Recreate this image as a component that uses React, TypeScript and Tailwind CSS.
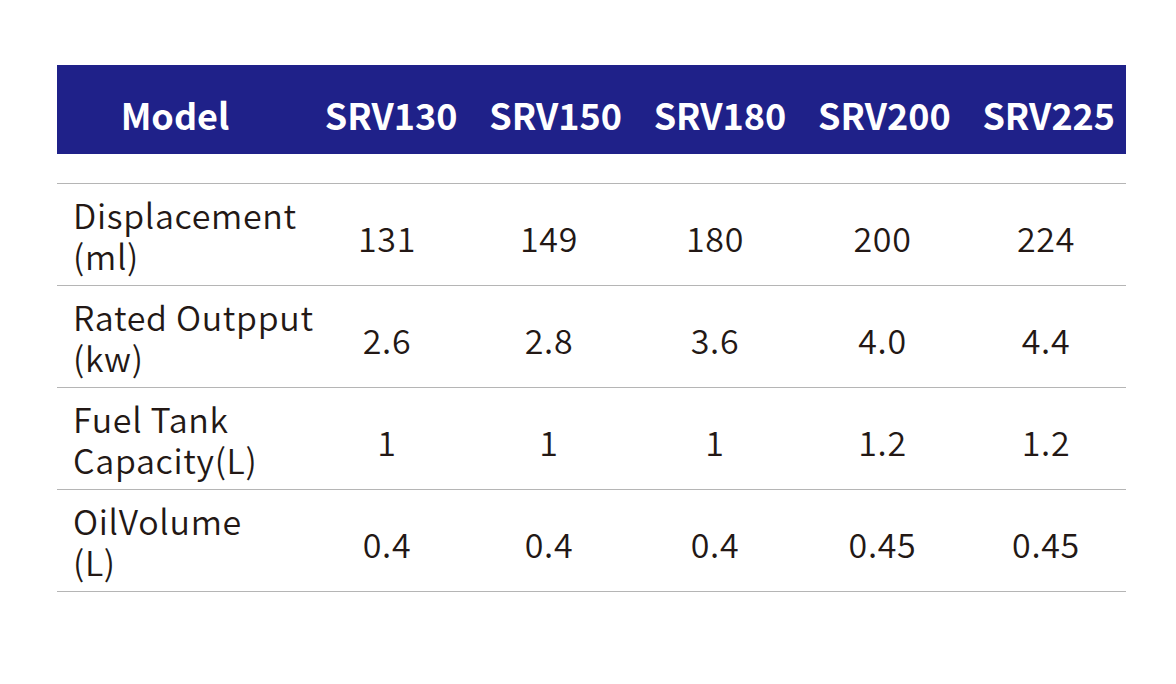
const models = ["SRV130", "SRV150", "SRV180", "SRV200", "SRV225"];

const rows = [
  { label: ["Displacement", "(ml)"], values: ["131", "149", "180", "200", "224"] },
  { label: ["Rated Outpput", "(kw)"], values: ["2.6", "2.8", "3.6", "4.0", "4.4"] },
  { label: ["Fuel Tank", "Capacity(L)"], values: ["1", "1", "1", "1.2", "1.2"] },
  { label: ["OilVolume", "(L)"], values: ["0.4", "0.4", "0.4", "0.45", "0.45"] },
];

export default function App() {
  return (
    <div
      className="w-[1176px] h-[684px] bg-white pt-[65px] pl-[57px]"
      style={{ fontFamily: '"Noto Sans CJK SC", "Noto Sans", sans-serif' }}
    >
      <div className="w-[1069px]">
        {/* header */}
        <div className="grid grid-cols-[252px_repeat(5,164.4px)] h-[89px] items-center bg-[#1f2189] text-white font-bold text-[36px] pt-[8px]">
          <div className="text-center pr-[16px]">Model</div>
          {models.map((m) => (
            <div key={m} className="text-center">
              {m}
            </div>
          ))}
        </div>

        <div className="mt-[29px] border-t border-[#b5b5b5]">
          {rows.map((row, i) => (
            <div
              key={i}
              className="grid grid-cols-[250px_160px_164px_168px_167px_160px] h-[102px] items-center border-b border-[#b5b5b5] text-[#231815] text-[34px] font-[350] tracking-[0.02em]"
            >
              <div className="pl-[16px] leading-[41px] whitespace-nowrap">
                <div>{row.label[0]}</div>
                <div>{row.label[1]}</div>
              </div>
              {row.values.map((v, j) => (
                <div key={j} className="text-center pt-[6px]">
                  {v}
                </div>
              ))}
            </div>
          ))}
        </div>
      </div>
    </div>
  );
}
